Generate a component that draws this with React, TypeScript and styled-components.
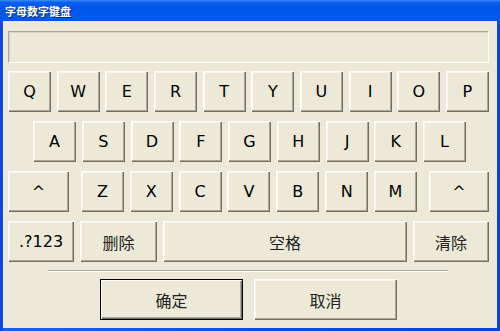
import styled, { createGlobalStyle, css } from 'styled-components';

const GlobalStyle = createGlobalStyle`
  html, body {
    margin: 0;
    padding: 0;
    background: #0a4ee6;
  }
  body {
    width: 500px;
    height: 331px;
    overflow: hidden;
  }
`;

const latinFont = css`
  font-family: 'DejaVu Sans', 'Liberation Sans', sans-serif;
`;

const cjkFont = css`
  font-family: 'Noto Sans CJK SC', 'DejaVu Sans', sans-serif;
`;

const Window = styled.div`
  width: 500px;
  height: 331px;
  box-sizing: border-box;
  display: flex;
  flex-direction: column;
  background: linear-gradient(to right, #0842d6 0%, #1a5ef0 1%, #0a4ee6 50%, #0842d6 99%);
  overflow: hidden;
`;

const TitleBar = styled.div`
  height: 21px;
  flex: none;
  display: flex;
  align-items: center;
  padding-left: 5px;
  background: linear-gradient(
    180deg,
    #3c8cf8 0%,
    #0a5ef0 12%,
    #0055e8 40%,
    #0059ee 85%,
    #0054e6 100%
  );
  ${cjkFont}
  font-size: 11px;
  font-weight: bold;
  color: #fff;
  text-shadow: 1px 1px 0 #0a1e8c;
`;

const Body = styled.div`
  flex: 1;
  margin: 0 3px 3px;
  background: #ece9d8;
  padding: 10px 5px 0;
  display: flex;
  flex-direction: column;
`;

const Display = styled.div`
  width: 481px;
  height: 32px;
  box-sizing: border-box;
  background: #ece9d8;
  border: 1px solid;
  border-color: #aca899 #fff #fff #aca899;
  box-shadow: inset 1px 1px 0 #d8d4c4;
`;

const Keyboard = styled.div`
  margin-top: 8px;
  display: flex;
  flex-direction: column;
  gap: 9px;
`;

const KeyRow = styled.div<{ $inset?: number; $width?: number }>`
  height: 41px;
  display: flex;
  justify-content: space-between;
  margin-left: ${(p) => p.$inset ?? 0}px;
  width: ${(p) => p.$width ?? 481}px;
`;

const ActionRow = styled.div`
  height: 41px;
  display: flex;
  gap: 6px;
`;

const LetterGroup = styled.div`
  display: flex;
  justify-content: space-between;
  width: 336px;
`;

const raised = css`
  box-sizing: border-box;
  background: #ece9d8;
  border: none;
  padding: 0;
  box-shadow:
    inset 1px 1px 0 #fff,
    inset -1px -1px 0 #716f64,
    inset -2px -2px 0 #aca899,
    inset 2px 2px 0 #f7f6f0;
  color: #000;
  display: flex;
  align-items: center;
  justify-content: center;
`;

const Key = styled.button<{ $w?: number; $cjk?: boolean }>`
  ${raised}
  width: ${(p) => p.$w ?? 43}px;
  height: 41px;
  ${(p) => (p.$cjk ? cjkFont : latinFont)}
  font-size: 16px;
  color: ${(p) => (p.$cjk ? '#222' : '#000')};
`;

const Separator = styled.div`
  margin: 8px 0 0 40px;
  width: 400px;
  height: 1px;
  background: #aca899;
  border-bottom: 1px solid #fff;
`;

const DialogRow = styled.div`
  margin-top: 7px;
  padding-left: 92px;
  display: flex;
  gap: 11px;
`;

const DialogButton = styled.button<{ $default?: boolean }>`
  ${raised}
  width: 143px;
  height: 41px;
  ${cjkFont}
  font-size: 16px;
  color: #222;
  ${(p) =>
    p.$default &&
    css`
      border: 1px solid #000;
      box-shadow:
        inset 1px 1px 0 #fff,
        inset -1px -1px 0 #716f64,
        inset -2px -2px 0 #aca899;
    `}
`;

const ROW1 = ['Q', 'W', 'E', 'R', 'T', 'Y', 'U', 'I', 'O', 'P'];
const ROW2 = ['A', 'S', 'D', 'F', 'G', 'H', 'J', 'K', 'L'];
const ROW3 = ['Z', 'X', 'C', 'V', 'B', 'N', 'M'];

export default function App(): React.ReactElement {
  return (
    <>
      <GlobalStyle />
      <Window>
        <TitleBar>字母数字键盘</TitleBar>
        <Body>
          <Display />
          <Keyboard>
            <KeyRow>
              {ROW1.map((k) => (
                <Key key={k}>{k}</Key>
              ))}
            </KeyRow>
            <KeyRow $inset={25} $width={433}>
              {ROW2.map((k) => (
                <Key key={k}>{k}</Key>
              ))}
            </KeyRow>
            <KeyRow>
              <Key $w={61}>^</Key>
              <LetterGroup>
                {ROW3.map((k) => (
                  <Key key={k}>{k}</Key>
                ))}
              </LetterGroup>
              <Key $w={60}>^</Key>
            </KeyRow>
            <ActionRow>
              <Key $w={66}>.?123</Key>
              <Key $w={77} $cjk>
                删除
              </Key>
              <Key $w={244} $cjk>
                空格
              </Key>
              <Key $w={76} $cjk>
                清除
              </Key>
            </ActionRow>
          </Keyboard>
          <Separator />
          <DialogRow>
            <DialogButton $default>确定</DialogButton>
            <DialogButton>取消</DialogButton>
          </DialogRow>
        </Body>
      </Window>
    </>
  );
}
